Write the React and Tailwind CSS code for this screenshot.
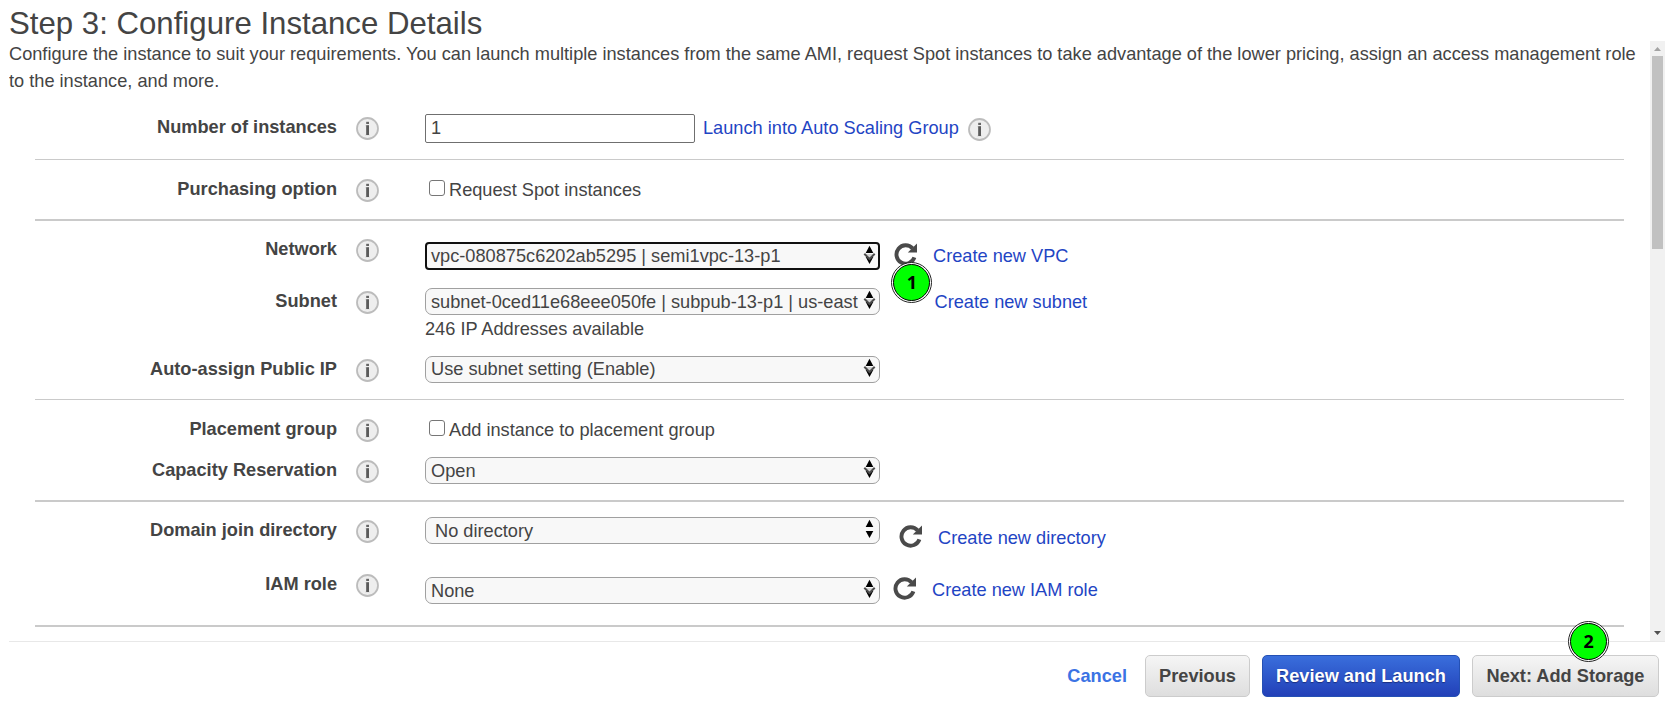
function Info({ className = "" }) {
  return (
    <svg className={"w-[23px] h-[23px] shrink-0 " + className} viewBox="0 0 23 23">
      <circle cx="11.5" cy="11.5" r="10.5" fill="#eeeeee" stroke="#bcbcbc" strokeWidth="1.8" />
      <path d="M9 8.2H13V17.5H14V18.5H9V17.5H10V9.2H9Z" fill="#dadada" />
      <rect x="10.2" y="4.8" width="2.8" height="2.2" fill="#666" />
      <rect x="10.2" y="8.2" width="2.8" height="9.8" fill="#5a5a5a" />
    </svg>
  );
}

function Refresh({ className = "" }) {
  return (
    <svg className={"w-[24px] h-[24px] shrink-0 " + className} viewBox="0 0 24 24">
      <path d="M18.6 6.4A9.2 9.2 0 1 0 20.4 15.4" fill="none" stroke="#4a4a4a" strokeWidth="3.9" />
      <path d="M23 1.4V10.6H13.8Z" fill="#4a4a4a" />
    </svg>
  );
}

function Arrows({ plain }) {
  return (
    <svg className="w-[13px] h-[21px] shrink-0" viewBox="0 0 13 21">
      <path d="M6.5 1.8L10.3 9H2.7Z" fill="#000" />
      <path d="M6.5 20L2.7 13H10.3Z" fill="#000" />
      {!plain && (
        <>
          <path d="M2 9.9H11L6.5 14.6Z" fill="#d4d4d4" />
          <path d="M1.3 9.8L6.5 15L11.7 9.8" fill="none" stroke="#4c4c4c" strokeWidth="2" />
        </>
      )}
    </svg>
  );
}

function Select({ children, focus, plain, raised, className = "" }) {
  return (
    <div
      className={
        "flex w-[455px] shrink-0 items-start justify-between overflow-hidden bg-[#f8f8f8] " +
        (focus
          ? "h-[28px] rounded-[4px] border-2 border-[#101010] pr-[2px] pl-[4px] leading-[24px] "
          : "h-[27px] rounded-[7px] border border-[#a0a0a0] pr-[3px] pl-[5px] leading-[25px] ") +
        className
      }
    >
      <span className={"whitespace-nowrap " + (plain ? "pl-1 " : "") + (focus || raised ? "" : "pt-px")}>{children}</span>
      <Arrows plain={plain} />
    </div>
  );
}

function Row({ label, height, children }) {
  return (
    <div className={"flex items-start " + height}>
      <div className="mt-px w-[302px] shrink-0 text-right font-bold">{label}</div>
      <Info className="mt-1 ml-[19px] mr-[46px]" />
      {children}
    </div>
  );
}

function Check({ children }) {
  return (
    <div className="flex items-start pl-1">
      <span className="mt-[5px] mr-1 h-[16px] w-[16px] rounded-[3px] border border-[#767676] bg-white" />
      <span className="mt-[2px]">{children}</span>
    </div>
  );
}

function Link({ children, className = "" }) {
  return <a className={"whitespace-nowrap text-[#1f45c4] " + className}>{children}</a>;
}

function Marker({ children, className }) {
  return (
    <div
      className={
        "absolute flex h-[41px] w-[41px] items-center justify-center rounded-full border border-[#222] bg-white p-px " +
        className
      }
    >
      <div className="flex h-full w-full items-center justify-center rounded-full border-[1.5px] border-black bg-[#00ff00] font-['Open_Sans',sans-serif] text-[18px] leading-none font-bold text-black">
        {children}
      </div>
    </div>
  );
}

export default function App() {
  return (
    <div className="relative flex h-[706px] w-[1665px] flex-col overflow-hidden bg-white font-['Liberation_Sans',Arial,sans-serif] text-[18.2px] leading-[27px] text-[#444]">
      <h1 className="h-[41px] pl-[9px] pt-[6px] text-[31.2px] leading-[36px]">Step 3: Configure Instance Details</h1>
      <div className="ml-[9px] flex h-[600px] shrink-0">
        <div className="flex-1 overflow-hidden">
          <p className="h-[54px] w-[1641px]">
            Configure the instance to suit your requirements. You can launch multiple instances from the same AMI, request
            Spot instances to take advantage of the lower pricing, assign an access management role to the instance, and
            more.
          </p>
          <div className="ml-[26px] w-[1589px] pt-[18px]">
            <Row label="Number of instances" height="h-[46px]">
              <div className="mt-px h-[29px] w-[270px] rounded-[2px] border border-[#6f6f6f] pl-[5px] leading-[27px]">1</div>
              <Link className="mt-[2px] ml-2">Launch into Auto Scaling Group</Link>
              <Info className="mt-[5px] ml-[9px]" />
            </Row>
            <div className="mb-[15px] h-px bg-[#cacaca]" />
            <Row label="Purchasing option" height="h-[44px]">
              <Check>Request Spot instances</Check>
            </Row>
            <div className="mb-[14px] h-[2px] bg-[#cacaca]" />
            <Row label="Network" height="h-[52px]">
              <Select focus className="mt-[7px]">vpc-080875c6202ab5295 | semi1vpc-13-p1</Select>
              <Refresh className="mt-[7px] ml-[14px]" />
              <Link className="mt-[8px] ml-[15px]">Create new VPC</Link>
            </Row>
            <Row label="Subnet" height="h-[68px]">
              <div className="mt-px">
                <Select>subnet-0ced11e68eee050fe | subpub-13-p1 | us-east</Select>
                <div className="mt-px">246 IP Addresses available</div>
              </div>
              <Link className="mt-[2px] ml-[54.5px]">Create new subnet</Link>
            </Row>
            <Row label="Auto-assign Public IP" height="h-[44px]">
              <Select raised className="mt-px">Use subnet setting (Enable)</Select>
            </Row>
            <div className="mb-[15px] h-px bg-[#cacaca]" />
            <Row label="Placement group" height="h-[41px]">
              <Check>Add instance to placement group</Check>
            </Row>
            <Row label="Capacity Reservation" height="h-[44px]">
              <Select className="mt-px">Open</Select>
            </Row>
            <div className="mb-[14px] h-[2px] bg-[#cacaca]" />
            <Row label="Domain join directory" height="h-[54px]">
              <Select plain className="mt-px">No directory</Select>
              <Refresh className="mt-[8px] ml-[19px]" />
              <Link className="mt-[9px] ml-[15px]">Create new directory</Link>
            </Row>
            <Row label="IAM role" height="h-[55px]">
              <Select className="mt-[7px]">None</Select>
              <Refresh className="mt-[6px] ml-[13px]" />
              <Link className="mt-[7px] ml-[15px]">Create new IAM role</Link>
            </Row>
            <div className="h-[2px] bg-[#cacaca]" />
          </div>
        </div>
        <div className="flex w-[15px] flex-col items-center bg-[#f1f1f1]">
          <svg className="h-[15px] w-[15px]" viewBox="0 0 15 15">
            <path d="M4 10H11L7.5 6Z" fill="#a3a3a3" />
          </svg>
          <div className="h-[193px] w-[11px] bg-[#c1c1c1]" />
          <svg className="mt-auto h-[15px] w-[15px]" viewBox="0 0 15 15">
            <path d="M4 5H11L7.5 9Z" fill="#505050" />
          </svg>
        </div>
      </div>
      <div className="ml-[9px] flex h-[65px] items-start justify-end border-t border-[#e8e8e8] pt-[13px] pr-[6px] font-bold">
        <a className="mr-[18px] leading-[42px] text-[#3b73e4]">Cancel</a>
        <button className="mr-3 h-[42px] w-[105px] rounded-[5px] border border-[#ccc] bg-linear-to-b from-[#f5f5f5] to-[#dedede]">
          Previous
        </button>
        <button className="mr-3 h-[42px] w-[198px] rounded-[5px] border border-[#2450b4] bg-linear-to-b from-[#3a6edc] to-[#2340b8] text-white [text-shadow:0_1px_1px_#1a2f80]">
          Review and Launch
        </button>
        <button className="h-[42px] w-[187px] rounded-[5px] border border-[#ccc] bg-linear-to-b from-[#f5f5f5] to-[#dedede]">
          Next: Add Storage
        </button>
      </div>
      <Marker className="top-[261.5px] left-[891.3px]">1</Marker>
      <Marker className="top-[620.5px] left-[1568.2px]">2</Marker>
    </div>
  );
}
